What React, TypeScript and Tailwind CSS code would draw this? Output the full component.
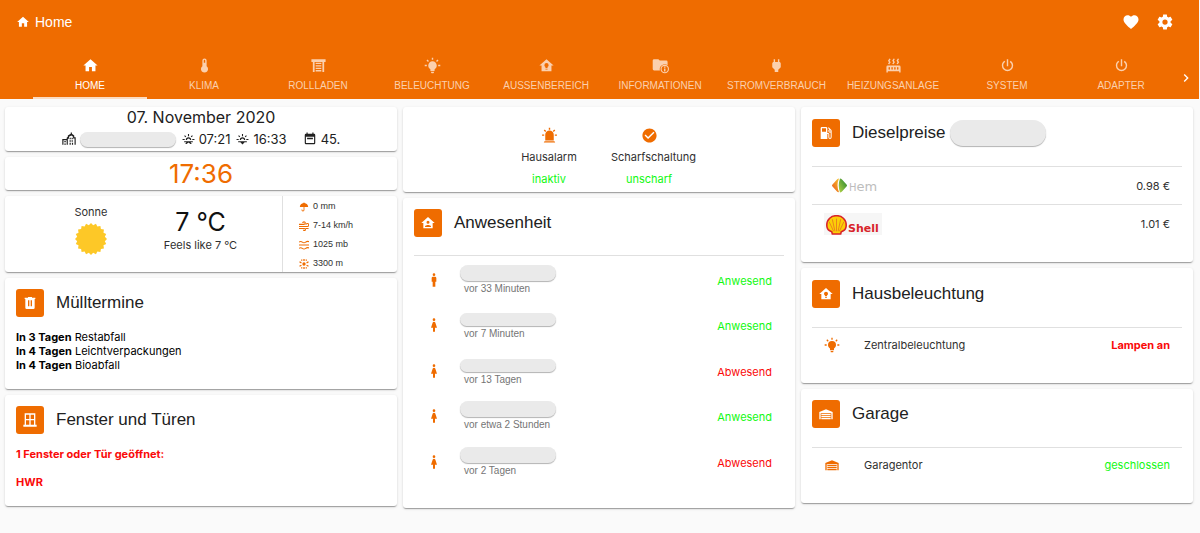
import type { ReactNode } from "react";

const ICONS = {
  home: "M10,20V14H14V20H19V12H22L12,3L2,12H5V20H10Z",
  heart:
    "M12,21.35L10.55,20.03C5.4,15.36 2,12.27 2,8.5C2,5.41 4.42,3 7.5,3C9.24,3 10.91,3.81 12,5.08C13.09,3.81 14.76,3 16.5,3C19.58,3 22,5.41 22,8.5C22,12.27 18.6,15.36 13.45,20.03L12,21.35Z",
  cog: "M12,15.5A3.5,3.5 0 0,1 8.5,12A3.5,3.5 0 0,1 12,8.5A3.5,3.5 0 0,1 15.5,12A3.5,3.5 0 0,1 12,15.5M19.43,12.97C19.47,12.65 19.5,12.33 19.5,12C19.5,11.67 19.47,11.34 19.43,11L21.54,9.37C21.73,9.22 21.78,8.95 21.66,8.73L19.66,5.27C19.54,5.05 19.27,4.96 19.05,5.05L16.56,6.05C16.04,5.66 15.5,5.32 14.87,5.07L14.5,2.42C14.46,2.18 14.25,2 14,2H10C9.75,2 9.54,2.18 9.5,2.42L9.13,5.07C8.5,5.32 7.96,5.66 7.44,6.05L4.95,5.05C4.73,4.96 4.46,5.05 4.34,5.27L2.34,8.73C2.21,8.95 2.27,9.22 2.46,9.37L4.57,11C4.53,11.34 4.5,11.67 4.5,12C4.5,12.33 4.53,12.65 4.57,12.97L2.46,14.63C2.27,14.78 2.21,15.05 2.34,15.27L4.34,18.73C4.46,18.95 4.73,19.03 4.95,18.95L7.44,17.94C7.96,18.34 8.5,18.68 9.13,18.93L9.5,21.58C9.54,21.82 9.75,22 10,22H14C14.25,22 14.46,21.82 14.5,21.58L14.87,18.93C15.5,18.67 16.04,18.34 16.56,17.94L19.05,18.95C19.27,19.03 19.54,18.95 19.66,18.73L21.66,15.27C21.78,15.05 21.73,14.78 21.54,14.63L19.43,12.97Z",
  thermometer:
    "M15 13V5A3 3 0 0 0 9 5V13A5 5 0 1 0 15 13M12 4A1 1 0 0 1 13 5V8H11V5A1 1 0 0 1 12 4Z",
  shutter:
    "M2 3H22V7H20V21H17.500V7H6.500V21H4V7H2V3M8 8H16V10H8V8M8 11.500H16V13.500H8V11.500M8 15H16V17H8V15M8 18.500H16V20.500H8V18.500Z",
  bulbOn:
    "M12,6A6,6 0 0,1 18,12C18,14.22 16.79,16.16 15,17.2V19A1,1 0 0,1 14,20H10A1,1 0 0,1 9,19V17.2C7.21,16.16 6,14.22 6,12A6,6 0 0,1 12,6M14,21V22A1,1 0 0,1 13,23H11A1,1 0 0,1 10,22V21H14M20,11H23V13H20V11M1,11H4V13H1V11M13,1V4H11V1H13M4.92,3.5L7.05,5.64L5.63,7.05L3.5,4.93L4.92,3.5M16.95,5.63L19.07,3.5L20.5,4.93L18.37,7.05L16.95,5.63Z",
  homeBulb:
    "M12 3L2 12H5V20H19V12H22L12 3M12 8.5A3 3 0 0 1 15 11.500C15 12.600 14.400 13.500 13.500 14.100V15.500H10.500V14.100C9.600 13.500 9 12.600 9 11.500A3 3 0 0 1 12 8.500M10.500 16.500H13.500V17.500H10.500Z",
  folderInfo:
    "M9 3H3A2 2 0 0 0 1 5V17A2 2 0 0 0 3 19H11.200A7 7 0 0 1 22 11.500V7A2 2 0 0 0 20 5H11L9 3M18 11A6 6 0 1 0 18 23A6 6 0 1 0 18 11M18 12.600A4.400 4.400 0 1 1 18 21.400A4.400 4.400 0 1 1 18 12.600M17 13.500H19V15.300H17V13.500M17 16.200H19V20.500H17V16.200Z",
  plug: "M16,7V3H14V7H10V3H8V7H8C7,7 6,8 6,9V14.5L9.5,18V21H14.5V18L18,14.5V9C18,8 17,7 16,7Z",
  radiator:
    "M7.95,3L6.53,5.19L7.95,7.4L5.95,10.5L4.22,9.6L5.64,7.39L4.22,5.19L6.22,2.09L7.95,3M13.95,2.89L12.53,5.1L13.95,7.3L11.95,10.4L10.22,9.5L11.64,7.3L10.22,5.1L12.22,2L13.95,2.89M20,2.89L18.56,5.1L20,7.3L18,10.4L16.25,9.5L17.67,7.3L16.25,5.1L18.25,2L20,2.89M2,22V14A2,2 0 0,1 4,12H20A2,2 0 0,1 22,14V22H20V20H4V22H2M6,14A1,1 0 0,0 5,15V17A1,1 0 0,0 7,17V15A1,1 0 0,0 6,14M10,14A1,1 0 0,0 9,15V17A1,1 0 0,0 11,17V15A1,1 0 0,0 10,14M14,14A1,1 0 0,0 13,15V17A1,1 0 0,0 15,17V15A1,1 0 0,0 14,14M18,14A1,1 0 0,0 17,15V17A1,1 0 0,0 19,17V15A1,1 0 0,0 18,14Z",
  power:
    "M16.56,5.44L15.11,6.89C16.84,7.94 18,9.83 18,12A6,6 0 0,1 12,18A6,6 0 0,1 6,12C6,9.83 7.16,7.94 8.88,6.88L7.44,5.44C5.36,6.88 4,9.28 4,12A8,8 0 0,0 12,20A8,8 0 0,0 20,12C20,9.28 18.64,6.88 16.56,5.44M13,3H11V13H13V3Z",
  chevron: "M8.59,16.58L13.17,12L8.59,7.41L10,6L16,12L10,18L8.59,16.58Z",
  trash:
    "M9,3V4H4V6H5V19A2,2 0 0,0 7,21H17A2,2 0 0,0 19,19V6H20V4H15V3H9M9,8H11V17H9V8M13,8H15V17H13V8Z",
  window:
    "M4 2H20V19H22V22H2V19H4V2M6 4V10.500H11V4H6M13 4V10.500H18V4H13M6 12.500V19H11V12.500H6M13 12.500V19H18V12.500H13Z",
  homeAccount:
    "M12,3L2,12H5V20H19V12H22L12,3M12,8.75A2.25,2.25 0 0,1 14.25,11A2.25,2.25 0 0,1 12,13.25A2.25,2.25 0 0,1 9.75,11A2.25,2.25 0 0,1 12,8.75M12,15C13.5,15 16.5,15.75 16.5,17.25V18H7.5V17.25C7.5,15.75 10.5,15 12,15Z",
  gas: "M18,10A1,1 0 0,1 17,9A1,1 0 0,1 18,8A1,1 0 0,1 19,9A1,1 0 0,1 18,10M12,10H6V5H12V10M19.77,7.23L19.78,7.22L16.06,3.5L15,4.56L17.11,6.67C16.17,7 15.5,7.93 15.5,9A2.5,2.5 0 0,0 18,11.5C18.36,11.5 18.69,11.42 19,11.29V18.5A1,1 0 0,1 18,19.5A1,1 0 0,1 17,18.5V14A2,2 0 0,0 15,12H14V5A2,2 0 0,0 12,3H6A2,2 0 0,0 4,5V21H14V13.5H15.5V18.5A2.5,2.5 0 0,0 18,21A2.5,2.5 0 0,0 20.5,18.5V9C20.5,8.31 20.22,7.68 19.77,7.23Z",
  garage:
    "M22 9V20H20V11H4V20H2V9L12 5L22 9M19 12H5V14H19V12M19 18H5V20H19V18M19 15H5V17H19V15Z",
  male: "M12,2A2,2 0 0,1 14,4A2,2 0 0,1 12,6A2,2 0 0,1 10,4A2,2 0 0,1 12,2M10.5,7H13.5A2,2 0 0,1 15.5,9V14.5H14V22H10V14.5H8.5V9A2,2 0 0,1 10.5,7Z",
  female:
    "M12,2A2,2 0 0,1 14,4A2,2 0 0,1 12,6A2,2 0 0,1 10,4A2,2 0 0,1 12,2M10.5,22V16H7.5L10.09,8.41C10.34,7.59 11.1,7 12,7C12.9,7 13.66,7.59 13.91,8.41L16.5,16H13.5V22H10.5Z",
  alarm:
    "M6,6.9L3.87,4.78L5.28,3.37L7.4,5.5L6,6.9M13,1V4H11V1H13M20.13,4.78L18,6.9L16.6,5.5L18.72,3.37L20.13,4.78M4.5,10.5V12.5H1.5V10.5H4.5M19.5,10.5H22.5V12.5H19.5V10.5M6,20H18A2,2 0 0,1 20,22H4A2,2 0 0,1 6,20M12,5A6,6 0 0,1 18,11V19H6V11A6,6 0 0,1 12,5Z",
  check:
    "M12 2C6.5 2 2 6.5 2 12S6.5 22 12 22 22 17.5 22 12 17.5 2 12 2M10 17L5 12L6.41 10.59L10 14.17L17.59 6.58L19 8L10 17Z",
  city: "M0.500 22V12H8V10L10 8V6L15 3V1H17V3L21 6V9H23.500V22H21.500V11H19V8L16 6L12 8V11L10 12V22H8V14H2.500V22H0.500M4 15.500H6.500V17.500H4V15.500M4 19.500H6.500V22H4V19.500M13 10H15V12.500H13V10M16.500 10H18.500V12.500H16.500V10M13 14H15V16.500H13V14M16.500 14H18.500V16.500H16.500V14M13 18.500H15V22H13V18.500M17 18.500H19V22H17V18.500Z",
  sunrise:
    "M1 11H5V13H1V11M19 11H23V13H19V11M7 13A5 5 0 0 1 17 13H14.800A2.800 2.800 0 0 0 9.200 13H7M11 2H13V6H11V2M4 5.500L5.400 4.100L7.800 6.500L6.400 7.900L4 5.500M18.600 4.100L20 5.500L17.600 7.900L16.200 6.500L18.600 4.100M4 15H20V17H15.800L18 20.500H15.500L12 17.500L8.500 20.500H6L8.200 17H4V15Z",
  sunset:
    "M1 11H5V13H1V11M19 11H23V13H19V11M7 13A5 5 0 0 1 17 13H14.800A2.800 2.800 0 0 0 9.200 13H7M11 2H13V6H11V2M4 5.500L5.400 4.100L7.800 6.500L6.400 7.900L4 5.500M18.600 4.100L20 5.500L17.600 7.900L16.200 6.500L18.600 4.100M4 15H20V17H16L12 21L8 17H4V15Z",
  calendar:
    "M6 1H8V3H16V1H18V3H19A2 2 0 0 1 21 5V19A2 2 0 0 1 19 21H5A2 2 0 0 1 3 19V5A2 2 0 0 1 5 3H6V1M5 8V19H19V8H5M7 10H17V12.500H7V10Z",
  umbrella:
    "M11 1H13V2.100C18 2.600 22 6.500 22 12H13V19A3.500 3.500 0 0 1 6 19V18H8V19A1.500 1.500 0 0 0 11 19V12H2C2 6.500 6 2.600 11 2.100V1Z",
  snow: "M10.500 0H13.500V5H10.500V0M10.500 19H13.500V24H10.500V19M0.500 8L2 5.500L6.500 8L5 10.500L0.500 8M17.500 16L19 13.500L23.500 16L22 18.500L17.500 16M0.500 16L5 13.500L6.500 16L2 18.500L0.500 16M17.500 8L22 5.500L23.500 8L19 10.500L17.500 8M12 8A4 4 0 1 0 12 16A4 4 0 1 0 12 8M5 1H8V4H5V1M16 1H19V4H16V1M5 20H8V23H5V20M16 20H19V23H16V20Z",
};

type IconName = keyof typeof ICONS;

function Icon({ name, className }: { name: IconName; className: string }) {
  return (
    <svg viewBox="0 0 24 24" fill="currentColor" fillRule="evenodd" aria-hidden="true" className={`shrink-0 ${className}`}>
      <path d={ICONS[name]} />
    </svg>
  );
}

function LineIcon({ d }: { d: string }) {
  return (
    <svg viewBox="0 0 24 24" fill="none" stroke="currentColor" strokeWidth="2.600" aria-hidden="true" className="size-2.5 shrink-0 text-[#ef6c00]">
      <path d={d} />
    </svg>
  );
}

const WIND = "M0 8H12A3 3 0 1 0 9 5M0 13H20A3.500 3.500 0 1 0 16.500 9M0 18H13A2.500 2.500 0 1 1 10.500 21M16 18H23";
const WAVES = "M0 5Q4 2 8 5T16 5T24 4M0 12H24M0 20Q4 17 8 20T16 20T24 19";

const TABS: { label: string; icon: IconName }[] = [
  { label: "HOME", icon: "home" },
  { label: "KLIMA", icon: "thermometer" },
  { label: "ROLLLADEN", icon: "shutter" },
  { label: "BELEUCHTUNG", icon: "bulbOn" },
  { label: "AUSSENBEREICH", icon: "homeBulb" },
  { label: "INFORMATIONEN", icon: "folderInfo" },
  { label: "STROMVERBRAUCH", icon: "plug" },
  { label: "HEIZUNGSANLAGE", icon: "radiator" },
  { label: "SYSTEM", icon: "power" },
  { label: "ADAPTER", icon: "power" },
];

const PEOPLE: { icon: IconName; since: string; present: boolean; tall: boolean }[] = [
  { icon: "male", since: "vor 33 Minuten", present: true, tall: true },
  { icon: "female", since: "vor 7 Minuten", present: true, tall: false },
  { icon: "female", since: "vor 13 Tagen", present: false, tall: false },
  { icon: "female", since: "vor etwa 2 Stunden", present: true, tall: true },
  { icon: "female", since: "vor 2 Tagen", present: false, tall: true },
];

function Card({ className = "", children }: { className?: string; children: ReactNode }) {
  return (
    <section
      className={`rounded-[3px] bg-white shadow-[0_2px_1px_-1px_rgba(0,0,0,0.2),0_1px_1px_0_rgba(0,0,0,0.14),0_1px_3px_0_rgba(0,0,0,0.12)] ${className}`}
    >
      {children}
    </section>
  );
}

function CardTitle({ icon, children }: { icon: IconName; children: ReactNode }) {
  return (
    <div className="flex items-center gap-3">
      <span className="flex size-7 shrink-0 items-center justify-center rounded-[3px] bg-[#ef6c00] text-white">
        <Icon name={icon} className="size-4" />
      </span>
      <h2 className="font-['Liberation_Sans',sans-serif] text-[17px] leading-7 text-[#212121]">{children}</h2>
    </div>
  );
}

function Pill({ className }: { className: string }) {
  return <span className={`block w-24 rounded-full bg-[#eaeaea] shadow-[0_1px_1px_rgba(0,0,0,0.3)] ${className}`} />;
}

function Sun() {
  const points = Array.from({ length: 40 }, (_, i) => {
    const r = i % 2 ? 14 : 16;
    const a = (i * Math.PI) / 20;
    return `${16 + r * Math.sin(a)},${16 - r * Math.cos(a)}`;
  }).join(" ");
  return (
    <svg viewBox="0 0 32 32" className="size-8" aria-hidden="true">
      <polygon points={points} fill="#fdc827" />
    </svg>
  );
}

function HemLogo() {
  return (
    <span className="flex items-end gap-0.5 pl-2">
      <svg viewBox="0 0 30 30" className="size-[15px]" aria-hidden="true">
        <defs>
          <linearGradient id="hemLeft" x1="0" y1="1" x2="1" y2="0">
            <stop offset="0" stopColor="#e8551c" />
            <stop offset="1" stopColor="#f8c32c" />
          </linearGradient>
          <linearGradient id="hemRight" x1="0" y1="1" x2="1" y2="0">
            <stop offset="0" stopColor="#b6d545" />
            <stop offset="1" stopColor="#22822f" />
          </linearGradient>
        </defs>
        <path d="M14 1Q8 14 14 28Q12 29 10 27L1 17Q-1 15 1 13L10 3Q12 1 14 1Z" fill="url(#hemLeft)" />
        <path d="M16 1Q18 1 20 3L29 13Q31 15 29 17L20 27Q18 29 16 29Q11 15 16 1Z" fill="url(#hemRight)" />
      </svg>
      <span className="font-['DejaVu_Sans',sans-serif] text-[13px] leading-2.5 text-[#bdbdbd]">
        <span className="text-[10px]">H</span>em
      </span>
    </span>
  );
}

function ShellLogo() {
  return (
    <span className="flex w-[58px] items-end bg-[#f6f6f6] pt-0.5 pl-0.5">
      <svg viewBox="0 0 40 38" className="h-5 w-[21px] shrink-0" aria-hidden="true">
        <path
          d="M20 1.500C30 0.500 38.500 9 38.500 19C38.500 24 37 28 33 30L29 32L28 36H12L11 32L7 30C3 28 1.500 24 1.500 19C1.500 9 10 0.500 20 1.500Z"
          fill="#fbce07"
          stroke="#d8232a"
          strokeWidth="3"
        />
        <path d="M20 31V7M17 31L12 8M23 31L28 8M14.500 31L6 13M25.500 31L34 13" stroke="#e2562a" strokeWidth="1.200" />
      </svg>
      <span className="pl-px font-['DejaVu_Sans',sans-serif] text-[11px] leading-[13px] font-bold text-[#d8232a]">Shell</span>
    </span>
  );
}

function Status({ ok, children }: { ok: boolean; children: ReactNode }) {
  return <span className={ok ? "text-[#12f812]" : "text-[#fa0a0a]"}>{children}</span>;
}

export default function App() {
  return (
    <div className="min-h-screen bg-[#fafafa] font-['Inter','Liberation_Sans',sans-serif] text-[11px] leading-[14px] text-[#303030]">
      <header className="mr-px bg-[#ef6c00] font-['Liberation_Sans',sans-serif] text-white">
        <div className="flex h-11 items-center pr-[25px] pl-4">
          <Icon name="home" className="size-[14px]" />
          <h1 className="flex-1 pl-[5px] text-sm">Home</h1>
          <div className="flex gap-4">
            <button type="button" aria-label="Favoriten">
              <Icon name="heart" className="size-[18px]" />
            </button>
            <button type="button" aria-label="Einstellungen">
              <Icon name="cog" className="size-[18px]" />
            </button>
          </div>
        </div>
        <nav className="flex overflow-hidden pt-[9px] pl-[33px]" role="tablist" aria-label="Bereiche">
          {TABS.map((tab, i) => (
            <button
              key={tab.label}
              type="button"
              role="tab"
              aria-selected={i === 0}
              className={`flex grow basis-[114px] flex-col items-center gap-1 border-b-2 px-2.5 pt-1 pb-1 text-[10px] leading-[15px] whitespace-nowrap ${
                i === 0 ? "border-[#fbdcc2] text-white" : "border-transparent text-[#fbd0ae]"
              }`}
            >
              <Icon name={tab.icon} className="size-[17px]" />
              {tab.label}
            </button>
          ))}
          <button type="button" aria-label="Weiter" className="flex w-[21px] items-center pt-1">
            <Icon name="chevron" className="size-4" />
          </button>
        </nav>
      </header>

      <main className="grid grid-cols-3 items-start gap-1.5 pt-2 pr-[7px] pb-6 pl-[5px]">
        <div className="flex flex-col gap-1.5">
          <Card className="pb-[3px] text-center text-[#212121]">
            <p className="text-base leading-5">07. November 2020</p>
            <div className="flex items-center justify-center pt-[3px] text-[13px] leading-[18px]">
              <Icon name="city" className="size-[14px]" />
              <Pill className="mr-1.5 ml-1 h-[15px]" />
              <Icon name="sunrise" className="mr-1 size-[13px]" />
              <span className="mr-1.5">07:21</span>
              <Icon name="sunset" className="mr-1 size-[13px]" />
              <span className="mr-4">16:33</span>
              <Icon name="calendar" className="mr-1 size-[14px]" />
              <span>45.</span>
            </div>
          </Card>

          <Card>
            <p className="text-center text-[26px] leading-[33px] text-[#ef6c00]">17:36</p>
          </Card>

          <Card className="flex h-[76px]">
            <div className="ml-[62px] flex w-12 flex-col items-center gap-1 pt-[9px]">
              <span>Sonne</span>
              <Sun />
            </div>
            <div className="flex flex-1 flex-col items-center pt-2 pl-1">
              <span className="text-[25px] leading-9 text-[#111111]">7 °C</span>
              <span className="leading-[10px]">Feels like 7 °C</span>
            </div>
            <ul className="flex w-[115px] flex-col justify-between border-l border-[#e0e0e0] pt-1 pb-0.5 pl-4 font-['Liberation_Sans',sans-serif] text-[9px] leading-[13px]">
              <li className="flex items-center gap-1">
                <Icon name="umbrella" className="size-2.5 text-[#ef6c00]" />0 mm
              </li>
              <li className="flex items-center gap-1">
                <LineIcon d={WIND} />
                7-14 km/h
              </li>
              <li className="flex items-center gap-1">
                <LineIcon d={WAVES} />
                1025 mb
              </li>
              <li className="flex items-center gap-1">
                <Icon name="snow" className="size-2.5 text-[#ef6c00]" />
                3300 m
              </li>
            </ul>
          </Card>

          <Card className="px-[11px] pt-[11px] pb-[17px] text-black">
            <CardTitle icon="trash">Mülltermine</CardTitle>
            <ul className="pt-[13px]">
              <li>
                <b>In 3 Tagen</b> Restabfall
              </li>
              <li>
                <b>In 4 Tagen</b> Leichtverpackungen
              </li>
              <li>
                <b>In 4 Tagen</b> Bioabfall
              </li>
            </ul>
          </Card>

          <Card className="px-[11px] pt-[11px] pb-[17px] font-bold text-[#fa0a0a]">
            <div className="font-normal">
              <CardTitle icon="window">Fenster und Türen</CardTitle>
            </div>
            <p className="pt-[13px]">1 Fenster oder Tür geöffnet:</p>
            <p className="pt-[14px]">HWR</p>
          </Card>
        </div>

        <div className="flex flex-col gap-1.5">
          <Card className="flex justify-center gap-6 pt-5 pb-1.5">
            <div className="flex w-[76px] flex-col items-center">
              <Icon name="alarm" className="size-[17px] text-[#ef6c00]" />
              <span className="w-full pt-1.5 pb-2 text-center whitespace-nowrap">Hausalarm</span>
              <Status ok>inaktiv</Status>
            </div>
            <div className="flex w-[76px] flex-col items-center">
              <Icon name="check" className="size-[17px] text-[#ef6c00]" />
              <span className="w-full pt-1.5 pb-2 text-center whitespace-nowrap">Scharfschaltung</span>
              <Status ok>unscharf</Status>
            </div>
          </Card>

          <Card className="px-[11px] pt-[11px] pb-[25px]">
            <CardTitle icon="homeAccount">Anwesenheit</CardTitle>
            <ul className="mt-[18px] grid h-[228px] grid-rows-5 border-t border-[#e0e0e0]">
              {PEOPLE.map((p) => (
                <li key={p.since} className="flex items-start pr-3 pl-3">
                  <Icon name={p.icon} className="mt-4 size-4 text-[#ef6c00]" />
                  <div className="flex h-[39px] flex-1 flex-col justify-end pl-[18px]">
                    <Pill className={p.tall ? "h-4" : "h-[13px]"} />
                    <span className="pt-0.5 pl-1 font-['Liberation_Sans',sans-serif] text-[10px] leading-3 text-[#757575]">
                      {p.since}
                    </span>
                  </div>
                  <span className="pt-[18px]">
                    <Status ok={p.present}>{p.present ? "Anwesend" : "Abwesend"}</Status>
                  </span>
                </li>
              ))}
            </ul>
          </Card>
        </div>

        <div className="flex flex-col gap-1.5">
          <Card className="px-[11px] pt-3 pb-5">
            <div className="flex items-center gap-1">
              <CardTitle icon="gas">Dieselpreise</CardTitle>
              <Pill className="h-[26px]" />
            </div>
            <ul className="mt-[19px]">
              <li className="flex h-[38px] items-center justify-between border-t border-[#e0e0e0] pr-3 pl-3">
                <HemLogo />
                <span>0.98 €</span>
              </li>
              <li className="flex h-[38px] items-center justify-between border-t border-[#e0e0e0] pr-3 pl-3">
                <ShellLogo />
                <span>1.01 €</span>
              </li>
            </ul>
          </Card>

          <Card className="px-[11px] pt-3 pb-[21px]">
            <CardTitle icon="homeBulb">Hausbeleuchtung</CardTitle>
            <div className="mt-[19px] flex h-[35px] items-center border-t border-[#e0e0e0] pr-3 pl-3">
              <Icon name="bulbOn" className="size-4 text-[#ef6c00]" />
              <span className="flex-1 pl-6">Zentralbeleuchtung</span>
              <strong className="text-[#fa0a0a]">Lampen an</strong>
            </div>
          </Card>

          <Card className="px-[11px] pt-[11px] pb-[21px]">
            <CardTitle icon="garage">Garage</CardTitle>
            <div className="mt-[19px] flex h-[35px] items-center border-t border-[#e0e0e0] pr-3 pl-3">
              <Icon name="garage" className="size-4 text-[#ef6c00]" />
              <span className="flex-1 pl-6">Garagentor</span>
              <Status ok>geschlossen</Status>
            </div>
          </Card>
        </div>
      </main>
    </div>
  );
}
